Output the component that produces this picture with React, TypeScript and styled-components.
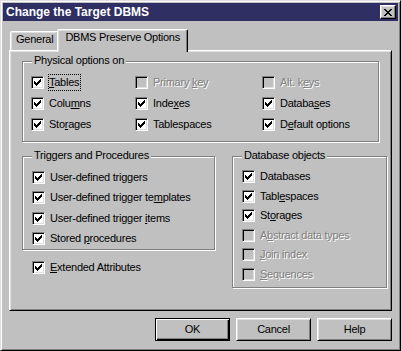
import styled, { createGlobalStyle } from 'styled-components';

const GlobalStyle = createGlobalStyle`
  html, body {
    margin: 0;
    padding: 0;
    background: #c0c0c0;
  }
`;

const CHECK_PATH =
  'M6 0h1v1h-1z M5 1h2v1h-2z M0 2h1v1h-1z M4 2h3v1h-3z M0 3h2v1h-2z M3 3h3v1h-3z M0 4h5v1h-5z M1 5h3v1h-3z M2 6h1v1h-1z';

const CLOSE_PATH =
  'M0 0h2v1h-2z M6 0h2v1h-2z M1 1h2v1h-2z M5 1h2v1h-2z M2 2h4v1h-4z M3 3h2v1h-2z M2 4h4v1h-4z M1 5h2v1h-2z M5 5h2v1h-2z M0 6h2v1h-2z M6 6h2v1h-2z';

const Window = styled.div`
  box-sizing: border-box;
  width: 401px;
  height: 351px;
  background: #c0c0c0;
  border: 1px solid;
  border-color: #dfdfdf #000 #000 #dfdfdf;
  box-shadow: inset 1px 1px 0 #fff, inset -1px -1px 0 #808080;
  padding: 2px;
  display: flex;
  flex-direction: column;
  font-family: 'Liberation Sans', Arial, sans-serif;
  font-size: 11px;
  line-height: 13px;
  letter-spacing: -0.25px;
  color: #000;
`;

const TitleBar = styled.div`
  height: 18px;
  flex: none;
  background: #2f2f64;
  display: flex;
  align-items: center;
  justify-content: space-between;
  padding: 0 2px 0 3px;
`;

const Title = styled.span`
  color: #fff;
  font-weight: bold;
  font-size: 12px;
  letter-spacing: 0;
`;

const CloseButton = styled.div`
  box-sizing: border-box;
  width: 16px;
  height: 14px;
  background: #c0c0c0;
  border: 1px solid;
  border-color: #fff #000 #000 #fff;
  box-shadow: inset -1px -1px 0 #808080, inset 1px 1px 0 #dfdfdf;
  display: flex;
  align-items: center;
  justify-content: center;
`;

const Body = styled.div`
  flex: 1;
  display: flex;
  flex-direction: column;
  padding: 8px 6px 7px;
`;

const TabStrip = styled.div`
  height: 21px;
  display: flex;
  align-items: flex-end;
  padding-left: 1px;
  position: relative;
  z-index: 1;
`;

const Tab = styled.div<{ $active?: boolean }>`
  box-sizing: border-box;
  height: ${(p) => (p.$active ? 23 : 19)}px;
  margin: 0 ${(p) => (p.$active ? '0 -2px -2px' : '0 0 0')};
  margin-left: ${(p) => (p.$active ? '-2px' : '0')};
  padding: 1px ${(p) => (p.$active ? 7 : 5)}px 0;
  background: #c0c0c0;
  border: 1px solid;
  border-bottom: none;
  border-color: #fff #000 transparent #fff;
  border-radius: 2px 2px 0 0;
  box-shadow: inset -1px 0 0 #808080, inset 1px 1px 0 #dfdfdf;
  position: relative;
  z-index: ${(p) => (p.$active ? 2 : 1)};
  white-space: nowrap;
`;

const Panel = styled.div`
  box-sizing: border-box;
  height: 261px;
  flex: none;
  border: 1px solid;
  border-color: #fff #000 #000 #fff;
  box-shadow: inset 1px 1px 0 #dfdfdf, inset -1px -1px 0 #808080;
  padding: 10px 0 0 12px;
`;

const Group = styled.div<{ $w: number; $h: number; $pt: number; $pl: number }>`
  box-sizing: border-box;
  position: relative;
  width: ${(p) => p.$w}px;
  height: ${(p) => p.$h}px;
  flex: none;
  border: 1px solid #808080;
  box-shadow: inset 1px 1px 0 #fff, 1px 1px 0 #fff;
  padding: ${(p) => p.$pt}px 0 0 ${(p) => p.$pl}px;
`;

const GroupTitle = styled.span`
  position: absolute;
  top: -8px;
  left: 9px;
  padding: 0 2px;
  background: #c0c0c0;
  white-space: nowrap;
`;

const OptionGrid = styled.div`
  display: grid;
  grid-template-columns: 104px 127px 1fr;
  grid-auto-rows: 13px;
  row-gap: 8px;
`;

const OptionList = styled.div<{ $gap: number }>`
  display: flex;
  flex-direction: column;
  row-gap: ${(p) => p.$gap}px;
`;

const LowerRow = styled.div`
  display: flex;
  gap: 17px;
  margin-top: 14px;
`;

const Column = styled.div`
  display: flex;
  flex-direction: column;
`;

const Standalone = styled.div`
  margin: 11px 0 0 10px;
`;

const CheckRow = styled.div`
  display: flex;
  align-items: center;
  gap: 5px;
  height: 13px;
  white-space: nowrap;
`;

const Box = styled.span<{ $disabled?: boolean }>`
  box-sizing: border-box;
  width: 13px;
  height: 13px;
  flex: none;
  border: 1px solid;
  border-color: #808080 #fff #fff #808080;
  box-shadow: inset 1px 1px 0 #000, inset -1px -1px 0 #dfdfdf;
  background: ${(p) => (p.$disabled ? '#c0c0c0' : '#fff')};
  display: flex;
  align-items: center;
  justify-content: center;
`;

const Label = styled.span<{ $disabled?: boolean; $focused?: boolean }>`
  color: ${(p) => (p.$disabled ? '#808080' : '#000')};
  text-shadow: ${(p) => (p.$disabled ? '1px 1px 0 #fff' : 'none')};
  outline: ${(p) => (p.$focused ? '1px dotted #000' : 'none')};
  padding: ${(p) => (p.$focused ? '1px 1px 1px 0' : '0')};
  margin: ${(p) => (p.$focused ? '-1px -1px -1px 0' : '0')};

  u {
    text-underline-offset: 1px;
  }
`;

const ButtonRow = styled.div`
  display: flex;
  justify-content: flex-end;
  gap: 6px;
  margin-top: 7px;
`;

const Button = styled.button<{ $default?: boolean }>`
  box-sizing: border-box;
  width: 75px;
  height: 23px;
  margin: 0;
  padding: 0;
  font: inherit;
  letter-spacing: inherit;
  color: #000;
  background: #c0c0c0;
  border: 1px solid;
  border-color: ${(p) => (p.$default ? '#000' : '#fff #000 #000 #fff')};
  box-shadow: ${(p) =>
    p.$default
      ? 'inset 1px 1px 0 #fff, inset -1px -1px 0 #000, inset -2px -2px 0 #808080'
      : 'inset 1px 1px 0 #dfdfdf, inset -1px -1px 0 #808080'};
`;

type Option = { label: string; checked: boolean; disabled?: boolean; focused?: boolean };

const physical: Option[] = [
  { label: '&Tables', checked: true, focused: true },
  { label: 'Primary &key', checked: false, disabled: true },
  { label: 'Alt. k&eys', checked: false, disabled: true },
  { label: 'Colu&mns', checked: true },
  { label: 'Inde&xes', checked: true },
  { label: 'Databa&ses', checked: true },
  { label: 'Sto&rages', checked: true },
  { label: 'Tablespaces', checked: true },
  { label: 'D&efault options', checked: true },
];

const triggers: Option[] = [
  { label: 'User-defined triggers', checked: true },
  { label: 'User-defined trigger te&mplates', checked: true },
  { label: 'User-defined trigger &items', checked: true },
  { label: 'Stored &procedures', checked: true },
];

const dbObjects: Option[] = [
  { label: 'Databases', checked: true },
  { label: 'Tabl&espaces', checked: true },
  { label: 'St&orages', checked: true },
  { label: 'A&bstract data types', checked: false, disabled: true },
  { label: '&Join index', checked: false, disabled: true },
  { label: '&Sequences', checked: false, disabled: true },
];

function Mnemonic({ text }: { text: string }) {
  const i = text.indexOf('&');
  if (i < 0) return <>{text}</>;
  return (
    <>
      {text.slice(0, i)}
      <u>{text[i + 1]}</u>
      {text.slice(i + 2)}
    </>
  );
}

function CheckBox({ option }: { option: Option }) {
  return (
    <CheckRow>
      <Box $disabled={option.disabled}>
        {option.checked && (
          <svg width="7" height="7" viewBox="0 0 7 7" shapeRendering="crispEdges">
            <path d={CHECK_PATH} fill="#000" />
          </svg>
        )}
      </Box>
      <Label $disabled={option.disabled} $focused={option.focused}>
        <Mnemonic text={option.label} />
      </Label>
    </CheckRow>
  );
}

export default function App() {
  return (
    <>
      <GlobalStyle />
      <Window>
        <TitleBar>
          <Title>Change the Target DBMS</Title>
          <CloseButton>
            <svg width="8" height="7" viewBox="0 0 8 7" shapeRendering="crispEdges">
              <path d={CLOSE_PATH} fill="#000" />
            </svg>
          </CloseButton>
        </TitleBar>

        <Body>
          <TabStrip>
            <Tab>General</Tab>
            <Tab $active>DBMS Preserve Options</Tab>
          </TabStrip>

          <Panel>
            <Group $w={357} $h={81} $pt={14} $pl={8}>
              <GroupTitle>Physical options on</GroupTitle>
              <OptionGrid>
                {physical.map((o) => (
                  <CheckBox key={o.label} option={o} />
                ))}
              </OptionGrid>
            </Group>

            <LowerRow>
              <Column>
                <Group $w={193} $h={94} $pt={14} $pl={9}>
                  <GroupTitle>Triggers and Procedures</GroupTitle>
                  <OptionList $gap={7.33}>
                    {triggers.map((o) => (
                      <CheckBox key={o.label} option={o} />
                    ))}
                  </OptionList>
                </Group>
                <Standalone>
                  <CheckBox option={{ label: '&Extended Attributes', checked: true }} />
                </Standalone>
              </Column>

              <Group $w={155} $h={132} $pt={13} $pl={9}>
                <GroupTitle>Database objects</GroupTitle>
                <OptionList $gap={6.6}>
                  {dbObjects.map((o) => (
                    <CheckBox key={o.label} option={o} />
                  ))}
                </OptionList>
              </Group>
            </LowerRow>
          </Panel>

          <ButtonRow>
            <Button $default>OK</Button>
            <Button>Cancel</Button>
            <Button>Help</Button>
          </ButtonRow>
        </Body>
      </Window>
    </>
  );
}
